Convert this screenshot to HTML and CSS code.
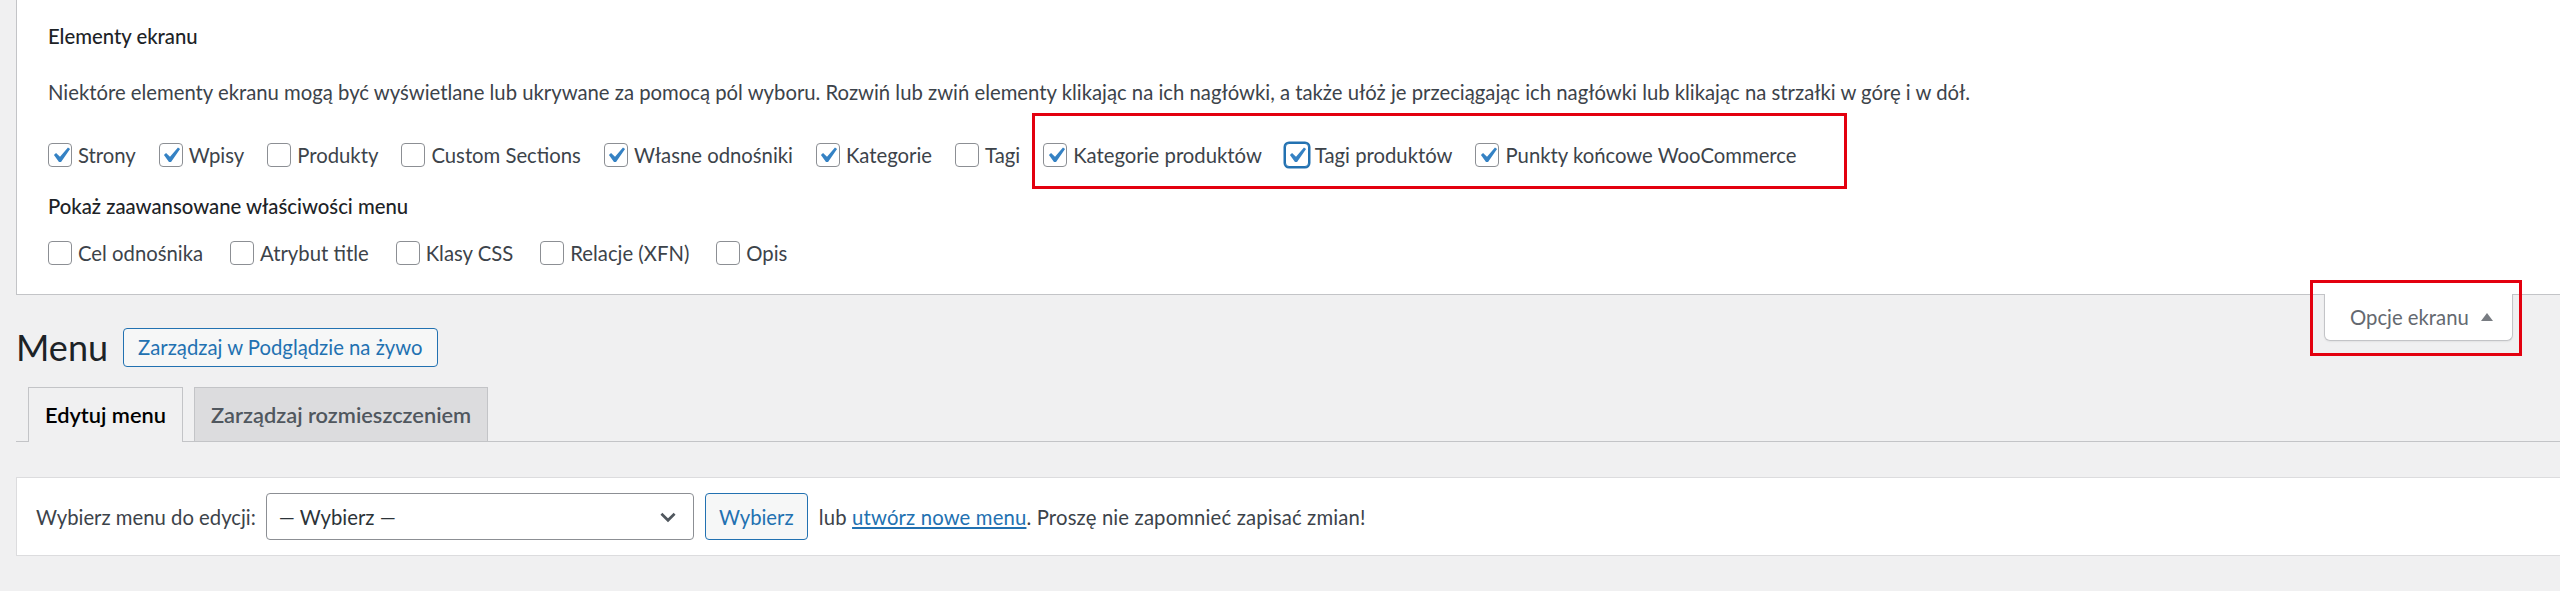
FILE: index.html
```html
<!DOCTYPE html>
<html lang="pl">
<head>
  <meta charset="UTF-8">
  <meta name="viewport" content="width=device-width, initial-scale=1.0">
  <title>Menu</title>
  <link rel="stylesheet" href="styles.css">
</head>
<body>
  <div class="screen-meta">
    <fieldset class="prefs">
      <div class="legend">Elementy ekranu</div>
      <p class="desc">Niektóre elementy ekranu mogą być wyświetlane lub ukrywane za pomocą pól wyboru. Rozwiń lub zwiń elementy klikając na ich nagłówki, a także ułóż je przeciągając ich nagłówki lub klikając na strzałki w górę i w dół.</p>
      <div class="cb-row">
        <label class="cb-label"><span class="cb checked"><svg viewBox="0 0 20 20"><path d="M14.83 4.89l1.34.94-5.81 8.38H9.02L5.78 9.67l1.34-1.25 2.57 2.4z"/></svg></span>Strony</label>
        <label class="cb-label"><span class="cb checked"><svg viewBox="0 0 20 20"><path d="M14.83 4.89l1.34.94-5.81 8.38H9.02L5.78 9.67l1.34-1.25 2.57 2.4z"/></svg></span>Wpisy</label>
        <label class="cb-label"><span class="cb"></span>Produkty</label>
        <label class="cb-label"><span class="cb"></span>Custom Sections</label>
        <label class="cb-label"><span class="cb checked"><svg viewBox="0 0 20 20"><path d="M14.83 4.89l1.34.94-5.81 8.38H9.02L5.78 9.67l1.34-1.25 2.57 2.4z"/></svg></span>Własne odnośniki</label>
        <label class="cb-label"><span class="cb checked"><svg viewBox="0 0 20 20"><path d="M14.83 4.89l1.34.94-5.81 8.38H9.02L5.78 9.67l1.34-1.25 2.57 2.4z"/></svg></span>Kategorie</label>
        <label class="cb-label"><span class="cb"></span>Tagi</label>
        <span class="highlight">
          <label class="cb-label"><span class="cb checked"><svg viewBox="0 0 20 20"><path d="M14.83 4.89l1.34.94-5.81 8.38H9.02L5.78 9.67l1.34-1.25 2.57 2.4z"/></svg></span>Kategorie produktów</label>
          <label class="cb-label"><span class="cb checked focus"><svg viewBox="0 0 20 20"><path d="M14.83 4.89l1.34.94-5.81 8.38H9.02L5.78 9.67l1.34-1.25 2.57 2.4z"/></svg></span>Tagi produktów</label>
          <label class="cb-label"><span class="cb checked"><svg viewBox="0 0 20 20"><path d="M14.83 4.89l1.34.94-5.81 8.38H9.02L5.78 9.67l1.34-1.25 2.57 2.4z"/></svg></span>Punkty końcowe WooCommerce</label>
        </span>
      </div>
      <div class="legend legend-2">Pokaż zaawansowane właściwości menu</div>
      <div class="cb-row cb-row-2">
        <label class="cb-label"><span class="cb"></span>Cel odnośnika</label>
        <label class="cb-label"><span class="cb"></span>Atrybut title</label>
        <label class="cb-label"><span class="cb"></span>Klasy CSS</label>
        <label class="cb-label"><span class="cb"></span>Relacje (XFN)</label>
        <label class="cb-label"><span class="cb"></span>Opis</label>
      </div>
    </fieldset>
  </div>

  <div class="screen-links">
    <button class="show-settings">Opcje ekranu <svg class="arrow" viewBox="0 0 12 8"><path d="M6 0l6 8H0z"/></svg></button>
  </div>

  <div class="wrap">
    <div class="page-head">
      <h1>Menu</h1>
      <a class="title-action" href="#">Zarządzaj w Podglądzie na żywo</a>
    </div>

    <nav class="nav-tabs">
      <a class="nav-tab active" href="#">Edytuj menu</a>
      <a class="nav-tab" href="#">Zarządzaj rozmieszczeniem</a>
    </nav>

    <div class="manage-menus">
      <span class="select-label">Wybierz menu do edycji:</span>
      <div class="select">— Wybierz —<svg class="chev" viewBox="0 0 20 20"><path d="M4 7l6 6 6-6"/></svg></div>
      <button class="btn">Wybierz</button>
      <span class="after">lub <a href="#">utwórz nowe menu</a>. Proszę nie zapomnieć zapisać zmian!</span>
    </div>
  </div>
</body>
</html>
```

FILE: styles.css
```css
body {
  margin: 0;
  background: #f0f0f1;
  color: #3c434a;
  font-family: Lato, "Liberation Sans", sans-serif;
  font-size: 20.3px;
  line-height: 30px;
}

.screen-meta {
  margin-left: 16px;
  background: #fff;
  border-left: 1px solid #c3c4c7;
  border-bottom: 1px solid #c3c4c7;
}

.prefs {
  margin: 0;
  border: none;
  padding: 21px 0 26px 31px;
}

.legend {
  color: #1d2327;
  font-weight: 500;
}

.desc {
  margin: 26px 0 0;
}

.cb-row {
  display: flex;
  align-items: center;
  margin-top: 33px;
  height: 30px;
}

.cb-row-2 {
  margin-top: 17px;
}

.legend-2 {
  margin-top: 21px;
}

.cb-label {
  display: inline-flex;
  align-items: center;
  margin-right: 23px;
  white-space: nowrap;
}

.cb-row-2 .cb-label {
  margin-right: 27px;
}

.cb {
  box-sizing: border-box;
  width: 24px;
  height: 24px;
  margin-right: 6px;
  border: 1px solid #8c8f94;
  border-radius: 4px;
  background: #fff;
  display: inline-flex;
  align-items: center;
  justify-content: center;
}

.cb svg {
  width: 31px;
  height: 31px;
  fill: #3582c4;
  flex: none;
}

.cb.focus {
  border-color: #2271b1;
  box-shadow: 0 0 0 1.5px #2271b1;
}

.highlight {
  position: relative;
  display: inline-flex;
}

.highlight::before {
  content: "";
  position: absolute;
  left: -11px;
  right: -27px;
  top: -27px;
  bottom: -19px;
  border: 3px solid #e3000f;
  pointer-events: none;
}

.screen-links {
  float: right;
  margin: -1px 47px 0 0;
  position: relative;
}

.screen-links::before {
  content: "";
  position: absolute;
  left: -14px;
  right: -9px;
  top: -14px;
  bottom: -15px;
  border: 3px solid #e3000f;
}

.show-settings {
  display: flex;
  align-items: center;
  box-sizing: border-box;
  width: 189px;
  height: 47px;
  padding: 0 0 0 25px;
  background: #fff;
  border: 1px solid #c3c4c7;
  border-top: none;
  border-radius: 0 0 6px 6px;
  box-shadow: 0 1px 2px rgba(0, 0, 0, 0.06);
  color: #646970;
  font: inherit;
}

.arrow {
  width: 12px;
  height: 8px;
  margin-left: 12px;
  fill: #787c82;
}

.page-head {
  display: flex;
  align-items: center;
  height: 40px;
  padding-top: 32px;
  margin-left: 16px;
}

h1 {
  margin: 0 15px 0 0;
  font-size: 36px;
  font-weight: 400;
  line-height: 40px;
  color: #1d2327;
}

.title-action {
  box-sizing: border-box;
  height: 39px;
  display: inline-flex;
  align-items: center;
  padding: 0 14px;
  border: 1px solid #2271b1;
  border-radius: 4px;
  background: #f6f7f7;
  color: #2271b1;
  text-decoration: none;
}

.nav-tabs {
  display: flex;
  margin: 20px 0 0 16px;
  padding-left: 12px;
  border-bottom: 1px solid #c3c4c7;
}

.nav-tab {
  box-sizing: border-box;
  height: 54px;
  display: flex;
  align-items: center;
  padding: 0 16px;
  margin-right: 11px;
  margin-bottom: -1px;
  border: 1px solid #c3c4c7;
  border-bottom: none;
  background: #dcdcde;
  color: #50575e;
  font-size: 21.8px;
  font-weight: 600;
  text-decoration: none;
}

.nav-tab.active {
  background: #f0f0f1;
  color: #000;
  height: 55px;
}

.manage-menus {
  display: flex;
  align-items: center;
  margin: 35px 0 0 16px;
  padding: 15px 0 15px 19px;
  background: #fff;
  border: 1px solid #dcdcde;
  border-right: none;
}

.select-label {
  margin-right: 10px;
}

.select {
  box-sizing: border-box;
  width: 428px;
  height: 47px;
  display: flex;
  align-items: center;
  justify-content: space-between;
  padding: 0 14px 0 12px;
  border: 1px solid #8c8f94;
  border-radius: 4px;
  color: #2c3338;
}

.chev {
  width: 22px;
  height: 22px;
  fill: none;
  stroke: #50575e;
  stroke-width: 2.4;
}

.btn {
  box-sizing: border-box;
  height: 47px;
  width: 103px;
  margin-left: 11px;
  border: 1px solid #2271b1;
  border-radius: 4px;
  background: #f6f7f7;
  color: #2271b1;
  font: inherit;
}

.after {
  margin-left: 11px;
  letter-spacing: 0.15px;
}

.after a {
  color: #2271b1;
}
```
